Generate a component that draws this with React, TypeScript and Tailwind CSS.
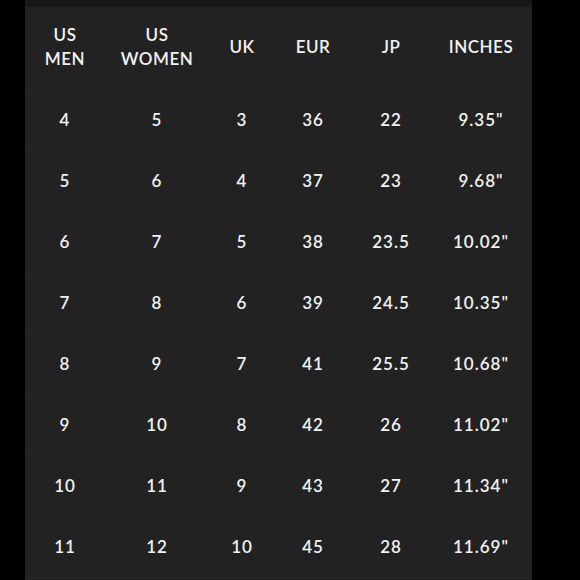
const columns = [
  { label: ["US", "MEN"], w: "w-[80px]" },
  { label: ["US", "WOMEN"], w: "w-[104px]" },
  { label: ["UK"], w: "w-[66px]" },
  { label: ["EUR"], w: "w-[76px]" },
  { label: ["JP"], w: "w-[80px]" },
  { label: ["INCHES"], w: "w-[100px]" },
];

const rows = [
  ["4", "5", "3", "36", "22", '9.35"'],
  ["5", "6", "4", "37", "23", '9.68"'],
  ["6", "7", "5", "38", "23.5", '10.02"'],
  ["7", "8", "6", "39", "24.5", '10.35"'],
  ["8", "9", "7", "41", "25.5", '10.68"'],
  ["9", "10", "8", "42", "26", '11.02"'],
  ["10", "11", "9", "43", "27", '11.34"'],
  ["11", "12", "10", "45", "28", '11.69"'],
];

export default function App() {
  return (
    <div className="w-[580px] h-[580px] bg-black overflow-hidden flex">
      <div
        className="ml-[25px] w-[507px] h-full bg-[#222222] flex flex-col text-[#f2f2f2] font-semibold text-[17px]"
        style={{ fontFamily: "Lato, 'Open Sans', sans-serif" }}
      >
        <div className="h-[7px] shrink-0 bg-[#171717]" />
        <div className="h-[83px] shrink-0 flex border-b border-[#262626] tracking-[0.5px]">
          {columns.map((c, i) => (
            <div key={i} className={`${c.w} flex flex-col items-center justify-center leading-[24px] pb-[2px]`}>
              {c.label.map(l => (
                <span key={l}>{l}</span>
              ))}
            </div>
          ))}
        </div>
        {rows.map((r, ri) => (
          <div key={ri} className="h-[61px] shrink-0 flex border-b border-[#262626] tracking-[1px]">
            {r.map((v, i) => (
              <div key={i} className={`${columns[i].w} flex items-center justify-center`}>
                {v}
              </div>
            ))}
          </div>
        ))}
      </div>
    </div>
  );
}
